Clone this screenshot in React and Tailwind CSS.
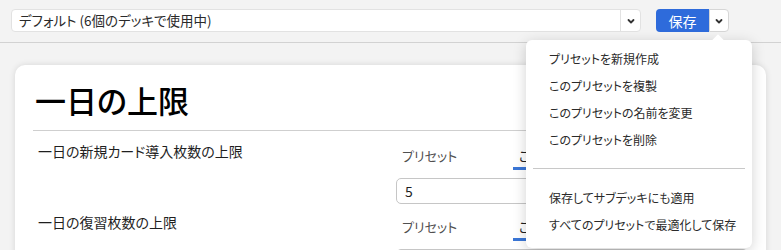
import React from 'react';

const Chevron = ({ className = '' }) => (
  <svg viewBox="0 0 10 10" className={className} fill="none" stroke="currentColor" strokeWidth="1.8" strokeLinecap="round" strokeLinejoin="round">
    <path d="M2.5 4 L5 6.5 L7.5 4" />
  </svg>
);

const menuTop = [
  'プリセットを新規作成',
  'このプリセットを複製',
  'このプリセットの名前を変更',
  'このプリセットを削除',
];

const menuBottom = [
  '保存してサブデッキにも適用',
  'すべてのプリセットで最適化して保存',
];

const LimitRow = ({ label, value }) => (
  <div className="flex">
    <div className="w-[363px] pl-[5px] text-[14px] leading-[20px] text-[#1f1f1f]">{label}</div>
    <div className="flex-1">
      <div className="flex h-[29px] items-center text-[13px] text-[#505050]">
        <span className="pl-[6px] w-[117px]">プリセット</span>
        <span className="h-full flex items-center px-[6px] border-b-[3px] border-[#3a76d6] text-[#1f1f1f] pt-[3px]">このデッキ</span>
      </div>
      <div className="mt-[8px] h-[26px] border border-[#c6c6c6] rounded-[5px] flex items-center pl-[8px] text-[14px] text-[#1f1f1f]">
        {value}
      </div>
    </div>
  </div>
);

export default function App() {
  return (
    <div className="relative w-[781px] h-[250px] overflow-hidden bg-[#f3f3f3] [font-feature-settings:'palt'] font-['Noto_Sans_CJK_JP','Noto_Sans',sans-serif]">
      {/* Top bar */}
      <div className="h-[43px] border-b border-[#d2d2d2] flex items-center pl-[11px] pb-[1px]">
        <div className="w-[630px] h-[23px] bg-white border border-[#e2e2e2] rounded-[4px] flex items-center">
          <span className="flex-1 pl-[7px] text-[13.5px] text-[#2a2a2a] leading-none">デフォルト (6個のデッキで使用中)</span>
          <span className="w-[20px] h-full border-l border-[#e2e2e2] flex items-center justify-center text-[#333]">
            <Chevron className="w-[10px] h-[10px]" />
          </span>
        </div>
        <div className="ml-[15px] flex h-[23px]">
          <button className="w-[53px] h-full bg-[#2e6bdb] text-white text-[14px] rounded-l-[4px] leading-none">保存</button>
          <button className="w-[20px] h-full bg-white border border-[#d6d6d6] rounded-r-[4px] flex items-center justify-center text-[#333]">
            <Chevron className="w-[10px] h-[10px]" />
          </button>
        </div>
      </div>

      {/* Card */}
      <div className="ml-[15px] mr-[15px] mt-[22px] bg-white rounded-[10px] shadow-[0_0_6px_rgba(0,0,0,0.12)] px-[18px] pt-[15px] h-[220px]">
        <h1 className="text-[31px] leading-[40px] font-medium text-black pl-[2px]">一日の上限</h1>
        <div className="mt-[10px] border-t border-[#cfcfcf]" />
        <div className="mt-[10px] flex flex-col gap-[8px]">
          <LimitRow label="一日の新規カード導入枚数の上限" value="5" />
          <LimitRow label="一日の復習枚数の上限" value="200" />
        </div>
      </div>

      {/* Dropdown menu */}
      <div className="absolute left-[526px] top-[40px] w-[226px] h-[208px] bg-white rounded-[6px] shadow-[0_3px_14px_rgba(0,0,0,0.18)]">
        <div className="absolute -top-[4px] left-[188px] w-[8px] h-[8px] bg-white rotate-45" />
        <div className="pt-[5px]">
          {menuTop.map((item) => (
            <div key={item} className="h-[27px] flex items-center pl-[23px] text-[12px] text-[#2a2a2a]">{item}</div>
          ))}
        </div>
        <div className="mx-[7px] mt-[15px] border-t border-[#c8c8c8]" />
        <div className="mt-[15px]">
          {menuBottom.map((item) => (
            <div key={item} className="h-[27px] flex items-center pl-[23px] text-[12px] text-[#2a2a2a]">{item}</div>
          ))}
        </div>
      </div>
    </div>
  );
}
